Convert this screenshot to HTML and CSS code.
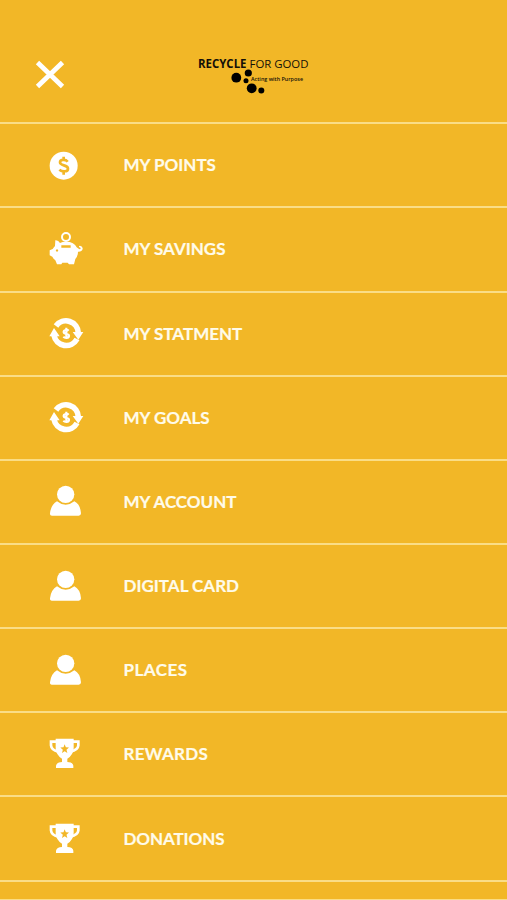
FILE: index.html
```
<!DOCTYPE html>
<html lang="en">
<head>
<meta charset="utf-8">
<title>Recycle for Good</title>
<link rel="stylesheet" href="styles.css">
</head>
<body>
<svg class="defs" aria-hidden="true">
  <symbol id="coin" viewBox="0 0 180 150">
    <circle cx="71" cy="77" r="42" fill="#fff"/>
    <path d="M83 65C78 58 60 57 60 67C60 79 84 73 84 86C84 97 65 95 58 89M71 50V60M71 93V104" fill="none" stroke="#f2b727" stroke-width="8"/>
  </symbol>
  <symbol id="pig" viewBox="0 0 180 150">
    <circle cx="78" cy="39" r="12" fill="none" stroke="#fff" stroke-width="6"/>
    <path fill="#fff" fill-rule="evenodd" d="M46 49Q55 48 60 57Q67 53 78 53Q103 53 110 70Q117 77 121 75Q124 72 118 70Q115 66 120 65Q129 67 128 75Q125 84 114 83Q114 96 106 105L102 121H87L83 116H67L64 121H51L46 109Q40 104 37 98L29 94V79L38 75Q41 70 45 66ZM64 64V71H92V64ZM51 76a3.500 3.500 0 1 0 .1 0Z"/>
  </symbol>
  <symbol id="cycle" viewBox="0 0 180 150">
    <path d="M48 51A37 37 0 0 1 115 72M111 90A37 37 0 0 1 42 79" fill="none" stroke="#fff" stroke-width="17"/>
    <path d="M98 69H130L115 92ZM28 82L42 57L59 82Z" fill="#fff"/>
    <path d="M86 65C82 61 71 62 71 69C71 77 87 73 87 80C87 88 75 88 70 83M79 56V90" fill="none" stroke="#fff" stroke-width="6.500"/>
  </symbol>
  <symbol id="person" viewBox="0 0 180 150">
    <circle cx="77" cy="46" r="26" fill="#fff"/>
    <path d="M51 67Q77 88 103 67Q121 76 123 103Q123 110 116 110H36Q29 110 30 103Q33 77 51 67Z" fill="#fff"/>
  </symbol>
  <symbol id="trophy" viewBox="0 0 180 150">
    <path d="M51 38H33V49Q34 63 55 68M95 38H115V49Q114 63 91 68" fill="none" stroke="#fff" stroke-width="8"/>
    <path d="M47 29H101V58Q99 80 82 89V99Q99 100 100 110V117H48V110Q50 100 66 99V89Q49 80 47 58Z" fill="#fff"/>
    <path d="M74 46L77.500 55L87 55.500L79.500 62L82 72L74 66.500L66 72L68.500 62L61 55.500L70.500 55Z" fill="#f2b727"/>
  </symbol>
</svg>
<div class="screen">
  <header class="top">
    <svg class="close" viewBox="0 0 30 30"><path d="M2.500 2.500L27.500 26.500M27.500 2.500L2.500 26.500" fill="none" stroke="#fff" stroke-width="4.800"/></svg>
    <svg class="logo" viewBox="0 0 135 50">
      <text class="brand strong" x="13" y="17.500" textLength="48.500" lengthAdjust="spacingAndGlyphs">RECYCLE</text>
      <text class="brand" x="64.500" y="17.500" textLength="59" lengthAdjust="spacingAndGlyphs">FOR GOOD</text>
      <text class="tagline" x="66" y="31" textLength="52" lengthAdjust="spacingAndGlyphs">Acting with Purpose</text>
      <circle cx="51.300" cy="27.700" r="4.900"/><circle cx="63.300" cy="23" r="3.600"/><circle cx="61" cy="30.700" r="2.500"/><circle cx="66.700" cy="38.300" r="4.900"/><circle cx="76.300" cy="40.500" r="3"/>
    </svg>
  </header>
  <nav class="menu">
    <a class="item"><svg class="icon"><use href="#coin"/></svg><span class="label">MY POINTS</span></a>
    <a class="item"><svg class="icon"><use href="#pig"/></svg><span class="label">MY SAVINGS</span></a>
    <a class="item"><svg class="icon"><use href="#cycle"/></svg><span class="label">MY STATMENT</span></a>
    <a class="item"><svg class="icon"><use href="#cycle"/></svg><span class="label">MY GOALS</span></a>
    <a class="item"><svg class="icon person"><use href="#person"/></svg><span class="label">MY ACCOUNT</span></a>
    <a class="item"><svg class="icon person"><use href="#person"/></svg><span class="label">DIGITAL CARD</span></a>
    <a class="item"><svg class="icon person"><use href="#person"/></svg><span class="label places">PLACES</span></a>
    <a class="item"><svg class="icon"><use href="#trophy"/></svg><span class="label rewards">REWARDS</span></a>
    <a class="item"><svg class="icon"><use href="#trophy"/></svg><span class="label donations">DONATIONS</span></a>
  </nav>
  <div class="end"></div>
</div>
</body>
</html>
```
FILE: styles.css
```
* { box-sizing: border-box; }
body { margin: 0; background: #f2b727; }
.defs { display: none; }
.screen { height: 900px; overflow: hidden; display: flex; flex-direction: column; }
.top { height: 122.2px; flex: none; display: flex; align-items: flex-start; padding: 50px 0 0 35px; }
.close { width: 30px; height: 30px; margin-top: 9.500px; }
.logo { width: 135px; height: 50px; margin-left: 120px; }
.brand { font: 11.500px "Open Sans", sans-serif; fill: #141008; }
.brand.strong { font-weight: 700; }
.tagline { font: 600 5.500px "Open Sans", sans-serif; fill: #141008; }
.menu { flex: none; }
.item { height: 84.16px; display: flex; align-items: center; padding-left: 40px; border-top: 2px solid #fadd86; }
.icon { width: 60px; height: 50px; flex: none; }
.person { margin-top: 5px; }
.label { margin: 0 0 0 23.5px; font: 700 17px/24px Lato, sans-serif; color: #fffbea; white-space: nowrap; -webkit-text-stroke: 0.2px #fffbea; }
.places { letter-spacing: 0.5px; }
.rewards { letter-spacing: 0.25px; }
.donations { letter-spacing: -0.1px; }
.end { flex: 1; border-top: 2px solid #fadd86; border-bottom: 1px solid #fadd86; }
```
